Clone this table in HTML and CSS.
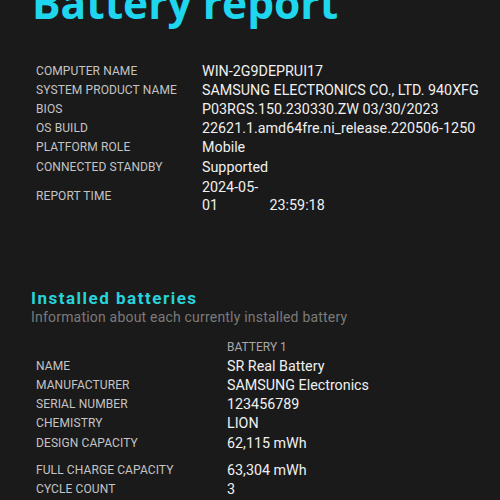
FILE: index.html
```html
<!DOCTYPE html>
<html>
<head>
<meta charset="utf-8">
<link rel="stylesheet" href="styles.css">
</head>
<body>
<h1 class="title">Battery report</h1>
<table class="info">
  <tr><td class="label">COMPUTER NAME</td><td class="value">WIN-2G9DEPRUI17</td></tr>
  <tr><td class="label">SYSTEM PRODUCT NAME</td><td class="value">SAMSUNG ELECTRONICS CO., LTD. 940XFG</td></tr>
  <tr><td class="label">BIOS</td><td class="value">P03RGS.150.230330.ZW 03/30/2023</td></tr>
  <tr><td class="label">OS BUILD</td><td class="value">22621.1.amd64fre.ni_release.220506-1250</td></tr>
  <tr><td class="label">PLATFORM ROLE</td><td class="value">Mobile</td></tr>
  <tr><td class="label">CONNECTED STANDBY</td><td class="value">Supported</td></tr>
  <tr><td class="label">REPORT TIME</td><td class="value"><span class="date">2024-05-01</span> <span class="time">23:59:18</span></td></tr>
</table>

<h2 class="section">Installed batteries</h2>
<div class="sub">Information about each currently installed battery</div>

<table class="batt">
  <tr><td class="label"></td><td class="head">BATTERY 1</td></tr>
  <tr><td class="label">NAME</td><td class="value">SR Real Battery</td></tr>
  <tr><td class="label">MANUFACTURER</td><td class="value">SAMSUNG Electronics</td></tr>
  <tr><td class="label">SERIAL NUMBER</td><td class="value">123456789</td></tr>
  <tr><td class="label">CHEMISTRY</td><td class="value">LION</td></tr>
  <tr class="gapafter"><td class="label">DESIGN CAPACITY</td><td class="value">62,115 mWh</td></tr>
  <tr><td class="label">FULL CHARGE CAPACITY</td><td class="value">63,304 mWh</td></tr>
  <tr><td class="label">CYCLE COUNT</td><td class="value">3</td></tr>
</table>
</body>
</html>
```

FILE: styles.css
```css
html, body {
  margin: 0;
  padding: 0;
  background: #1a1a1a;
  width: 500px;
  height: 500px;
  overflow: hidden;
}
body {
  font-family: Roboto, "Liberation Sans", sans-serif;
  color: #ececec;
}
.title {
  margin: -27px 0 0 32px;
  font-family: "Open Sans", sans-serif;
  font-weight: 700;
  font-size: 42.5px;
  line-height: 60px;
  color: #1ed6ee;
  letter-spacing: 0;
}
.info, .batt {
  border-collapse: collapse;
  margin-left: 34px;
}
.info {
  margin-top: 28px;
}
td {
  padding: 0 2px;
  height: 19.2px;
  vertical-align: middle;
  white-space: nowrap;
}
.label {
  font-size: 12px;
  color: #c4c4c4;
  letter-spacing: 0.1px;
}
.info .label { width: 162px; }
.batt .label { width: 187px; }
.value {
  font-size: 14.3px;
  color: #f0f0f0;
}
.info tr:last-child td {
  padding-top: 2px;
}
.date {
  display: inline-block;
  width: 64px;
  white-space: normal;
  line-height: 18px;
}
.section {
  margin: 75px 0 0 31px;
  font-size: 17px;
  font-weight: 700;
  color: #28d3dc;
  letter-spacing: 1.5px;
  line-height: 19px;
}
.sub {
  margin-left: 31px;
  font-size: 14px;
  color: #7a7a7a;
  letter-spacing: 0.2px;
  line-height: 18px;
}
.batt {
  margin-top: 11px;
}
.head {
  font-size: 12px;
  color: #a8a8a8;
}
.gapafter td {
  padding-bottom: 8px;
}
```
